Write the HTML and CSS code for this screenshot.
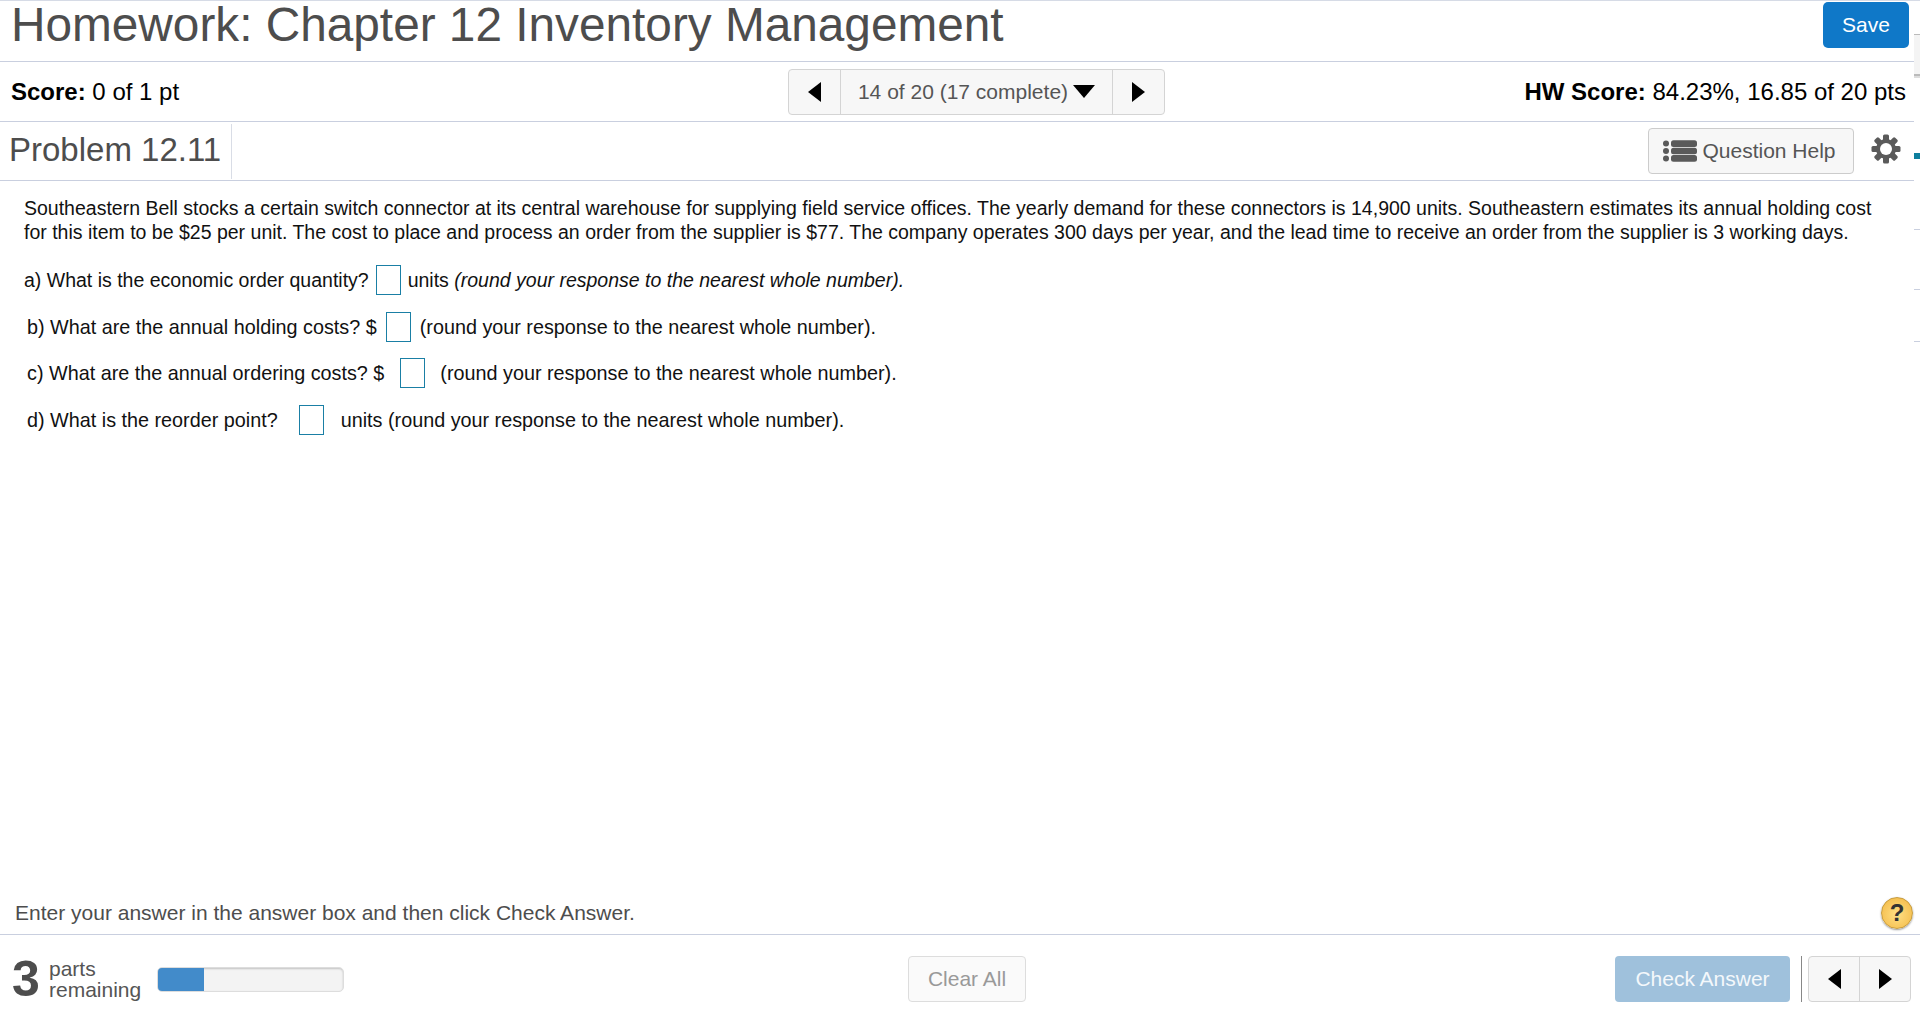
FILE: index.html
```html
<!DOCTYPE html>
<html lang="en">
  <head>
    <meta charset="UTF-8" />
    <meta name="viewport" content="width=device-width, initial-scale=1.0" />
    <title>Homework: Chapter 12 Inventory Management</title>
    <link rel="stylesheet" href="styles.css">
  </head>
  <body>
    <div class="player">
      <header class="title-bar">
        <h1 class="title">Homework: Chapter 12 Inventory Management</h1>
        <button class="btn-save">Save</button>
      </header>

      <div class="score-bar">
        <div class="score"><b>Score:</b> 0 of 1 pt</div>
        <div class="pager">
          <span class="pager-arrow"><span class="tri-left"></span></span>
          <span class="pager-label">14 of 20 (17 complete) <span class="tri-down"></span></span>
          <span class="pager-arrow"><span class="tri-right"></span></span>
        </div>
        <div class="hw-score"><b>HW Score:</b> 84.23%, 16.85 of 20 pts</div>
      </div>

      <div class="problem-bar">
        <h2 class="problem-name">Problem 12.11</h2>
        <div class="problem-tools">
          <button class="btn-help">
            <svg class="list-icon" width="34" height="22" viewBox="0 0 34 22">
              <circle cx="3" cy="3.5" r="3" />
              <circle cx="3" cy="11" r="3" />
              <circle cx="3" cy="18.5" r="3" />
              <rect x="8" y="0.3" width="26" height="6.6" rx="2.5" />
              <rect x="8" y="7.7" width="26" height="6.6" rx="2.5" />
              <rect x="8" y="15.1" width="26" height="6.6" rx="2.5" />
            </svg>
            Question Help
          </button>
          <svg class="gear" width="30" height="30" viewBox="0 0 30 30">
            <rect x="12" y="0.5" width="6" height="29" rx="1.5" />
            <rect x="12" y="0.5" width="6" height="29" rx="1.5" transform="rotate(45 15 15)" />
            <rect x="12" y="0.5" width="6" height="29" rx="1.5" transform="rotate(90 15 15)" />
            <rect x="12" y="0.5" width="6" height="29" rx="1.5" transform="rotate(135 15 15)" />
            <circle cx="15" cy="15" r="10" />
            <circle class="gear-hole" cx="15" cy="15" r="6" />
          </svg>
        </div>
      </div>

      <main class="question">
        <p class="intro">Southeastern Bell stocks a certain switch connector at its central warehouse for supplying field service offices. The yearly demand for these connectors is 14,900 units. Southeastern estimates its annual holding cost for this item to be $25 per unit. The cost to place and process an order from the supplier is $77. The company operates 300 days per year, and the lead time to receive an order from the supplier is 3 working days.</p>
        <p class="part part-a"><span>a) What is the economic order quantity?</span><span class="answer"></span><span>units <i>(round your response to the nearest whole number).</i></span></p>
        <p class="part part-b"><span>b) What are the annual holding costs? $</span><span class="answer"></span><span>(round your response to the nearest whole number).</span></p>
        <p class="part part-c"><span>c) What are the annual ordering costs? $</span><span class="answer"></span><span>(round your response to the nearest whole number).</span></p>
        <p class="part part-d"><span>d) What is the reorder point?</span><span class="answer"></span><span>units (round your response to the nearest whole number).</span></p>
      </main>

      <div class="hint-bar">
        <span>Enter your answer in the answer box and then click Check Answer.</span>
        <span class="help-ball">?</span>
      </div>

      <footer class="footer">
        <div class="parts">
          <span class="parts-count">3</span>
          <span class="parts-label">parts<br>remaining</span>
          <div class="progress"><div class="progress-fill"></div></div>
        </div>
        <button class="btn-clear">Clear All</button>
        <div class="actions">
          <button class="btn-check">Check Answer</button>
          <div class="mini-pager">
            <span class="mini-arrow"><span class="tri-left"></span></span>
            <span class="mini-arrow"><span class="tri-right"></span></span>
          </div>
        </div>
      </footer>
    </div>

    <!-- bits of the window behind, showing at the right edge -->
    <div class="side-strip">
      <div class="strip-top"></div>
      <div class="strip-panel"></div>
      <div class="strip-teal"></div>
      <div class="strip-line strip-line-1"></div>
      <div class="strip-line strip-line-2"></div>
      <div class="strip-line strip-line-3"></div>
    </div>
  </body>
</html>
```

FILE: styles.css
```css
html,
body {
    height: 100%;
}

body {
    margin: 0;
    font-family: "Liberation Sans", Arial, sans-serif;
    background-color: #fff;
    color: #000;
    overflow: hidden;
}

button {
    font-family: inherit;
    padding: 0;
}

.player {
    width: 1920px;
    height: 1020px;
    display: flex;
    flex-direction: column;
    box-sizing: border-box;
    border-top: 1px solid #d6dbe6;
}

/* Top rows */
.title-bar {
    height: 61px;
    box-sizing: border-box;
    flex: none;
    display: flex;
    align-items: flex-start;
    justify-content: space-between;
    margin-right: 6px;
    padding: 1px 5px 0 11px;
    border-bottom: 1px solid #c9cfdf;
}

.title {
    margin: 1px 0 0;
    font-size: 47.76px;
    line-height: 44px;
    font-weight: normal;
    color: #4d4d4d;
}

.btn-save {
    width: 86px;
    height: 46px;
    border: none;
    border-radius: 5px;
    background-color: #0f78c8;
    color: #fff;
    font-size: 21px;
}

.score-bar {
    height: 60px;
    box-sizing: border-box;
    flex: none;
    display: grid;
    grid-template-columns: 777px 377px 1fr;
    align-items: center;
    margin-right: 6px;
    padding: 0 8px 0 11px;
    font-size: 24px;
    border-bottom: 1px solid #c9cfdf;
}

.hw-score {
    text-align: right;
}

.pager {
    display: flex;
    height: 46px;
    box-sizing: border-box;
    border: 1px solid #d4d4d4;
    border-radius: 4px;
    background-color: #f7f7f7;
}

.pager-arrow {
    width: 51px;
    display: flex;
    align-items: center;
    justify-content: center;
}

.pager-label {
    flex: 1;
    display: flex;
    align-items: center;
    justify-content: center;
    gap: 5px;
    border-left: 1px solid #d4d4d4;
    border-right: 1px solid #d4d4d4;
    font-size: 21px;
    color: #555;
}

.tri-left,
.tri-right {
    display: block;
    border-top: 10px solid transparent;
    border-bottom: 10px solid transparent;
}

.tri-left {
    border-right: 13px solid #000;
}

.tri-right {
    border-left: 13px solid #000;
}

.tri-down {
    display: block;
    border-left: 11px solid transparent;
    border-right: 11px solid transparent;
    border-top: 13px solid #000;
}

.problem-bar {
    height: 59px;
    box-sizing: border-box;
    flex: none;
    display: flex;
    align-items: stretch;
    justify-content: space-between;
    margin-right: 6px;
    border-bottom: 1px solid #c9cfdf;
}

.problem-name {
    margin: 2px 0 1px;
    padding: 1px 10px 0 9px;
    border-right: 1px solid #d9dde6;
    font-size: 33px;
    line-height: 50px;
    font-weight: normal;
    color: #4d4d4d;
}

.problem-tools {
    display: flex;
    align-items: center;
    padding-right: 13px;
}

.btn-help {
    width: 206px;
    height: 46px;
    display: flex;
    align-items: center;
    justify-content: center;
    gap: 5px;
    padding-right: 3px;
    border: 1px solid #ccc;
    border-radius: 4px;
    background-color: #f7f7f7;
    color: #555;
    font-size: 21px;
    margin-right: 17px;
}

.list-icon,
.gear {
    fill: #5a5a5a;
}

.gear {
    margin-bottom: 4px;
}

.gear-hole {
    fill: #fff;
}

/* Question text */
.question {
    flex: 1;
    margin-right: 6px;
    padding: 15px 24px 0;
    font-size: 19.5px;
    line-height: 24px;
    color: #111;
}

.intro {
    margin: 0 0 21px;
}

.part {
    height: 30px;
    margin: 0 0 16.5px;
    display: flex;
    align-items: center;
    font-size: 19.8px;
}

.part-a {
    font-size: 19.5px;
}

.part-b,
.part-c,
.part-d {
    padding-left: 3px;
}

.answer {
    width: 25px;
    height: 30px;
    box-sizing: border-box;
    border: 1px solid #1a7fa5;
}

.part-a .answer {
    margin: 0 7px;
}

.part-b .answer {
    margin: 0 9px;
}

.part-c .answer {
    margin: 0 15px 0 16px;
}

.part-d .answer {
    margin: 0 17px 0 21px;
}

/* Bottom rows */
.hint-bar {
    height: 50px;
    box-sizing: border-box;
    flex: none;
    display: flex;
    align-items: center;
    justify-content: space-between;
    padding: 6px 7px 0 15px;
    border-bottom: 1px solid #c9cfdf;
    font-size: 21px;
    color: #4d4d4d;
}

.help-ball {
    width: 32px;
    height: 32px;
    border-radius: 50%;
    display: flex;
    align-items: center;
    justify-content: center;
    background: radial-gradient(circle at 50% 55%, #ffdf85, #f2b63f);
    border: 1px solid #c79c3e;
    box-shadow: 0 1px 2px rgba(0, 0, 0, 0.4);
    color: #333;
    font-size: 24px;
    font-weight: bold;
    box-sizing: border-box;
}

.footer {
    height: 85px;
    flex: none;
    box-sizing: border-box;
    display: grid;
    grid-template-columns: 896px 118px 1fr;
    align-items: center;
    padding: 21px 9px 18px 12px;
}

.parts {
    display: flex;
    align-items: center;
}

.parts-count {
    font-size: 50px;
    line-height: 46px;
    font-weight: bold;
    color: #4d4d4d;
    width: 37px;
}

.parts-label {
    font-size: 21px;
    line-height: 21px;
    color: #555;
    width: 108px;
}

.progress {
    width: 187px;
    height: 25px;
    box-sizing: border-box;
    border: 1px solid #ddd;
    border-radius: 5px;
    background-color: #f3f3f3;
    box-shadow: inset 0 1px 2px rgba(0, 0, 0, 0.2);
    overflow: hidden;
}

.progress-fill {
    width: 46px;
    height: 100%;
    background-color: #428bca;
}

.btn-clear {
    height: 46px;
    border: 1px solid #ddd;
    border-radius: 4px;
    background-color: #fafafa;
    color: #999;
    font-size: 21px;
}

.actions {
    display: flex;
    justify-content: flex-end;
    align-items: center;
}

.btn-check {
    width: 175px;
    height: 46px;
    border: none;
    border-radius: 4px;
    background-color: #9fc1dc;
    color: #f4f8fb;
    font-size: 21px;
}

.mini-pager {
    display: flex;
    width: 103px;
    height: 46px;
    box-sizing: border-box;
    margin-left: 18px;
    border: 1px solid #d4d4d4;
    border-radius: 4px;
    background-color: #f7f7f7;
    position: relative;
}

.mini-pager::before {
    content: "";
    position: absolute;
    left: -8px;
    top: -1px;
    bottom: -1px;
    border-left: 1px solid #888;
}

.mini-arrow {
    flex: 1;
    display: flex;
    align-items: center;
    justify-content: center;
}

.mini-arrow + .mini-arrow {
    border-left: 1px solid #d4d4d4;
}

/* Right edge */
.side-strip {
    position: absolute;
    top: 0;
    right: 0;
    width: 6px;
}

.strip-top {
    height: 34px;
    border-bottom: 1px solid #bbb;
}

.strip-panel {
    height: 39px;
    background-color: #f4f4f4;
    border-bottom: 2px solid #bbb;
    box-shadow: 0 2px 0 #ddd;
}

.strip-teal {
    height: 6px;
    margin-top: 77px;
    background-color: #0e7f9e;
}

.strip-line {
    height: 1px;
    background-color: #c9cfdf;
}

.strip-line-1 {
    margin-top: 70px;
}

.strip-line-2 {
    margin-top: 59px;
}

.strip-line-3 {
    margin-top: 51px;
}
```
